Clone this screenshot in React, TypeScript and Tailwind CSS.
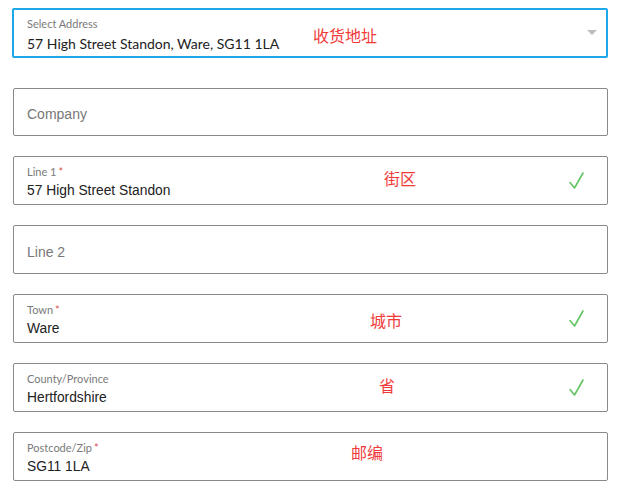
import React from "react";

const lato = { fontFamily: "Lato, 'Noto Sans', sans-serif" };
const arial = { fontFamily: "'Liberation Sans', Arial, sans-serif" };
const cjk = { fontFamily: "'Noto Sans CJK SC', sans-serif" };

function Check() {
  return (
    <svg width="18" height="20" viewBox="0 0 18 20" className="shrink-0">
      <path d="M2 11.5 L6.5 17 L15 2" fill="none" stroke="#62c462" strokeWidth="1.6" strokeLinecap="round" strokeLinejoin="round" />
    </svg>
  );
}

type FieldProps = {
  label?: string;
  required?: boolean;
  value?: string;
  placeholder?: string;
  check?: boolean;
  note?: string;
  noteLeft?: number;
  noteTop?: number;
  short?: boolean;
};

function Field({ label, required, value, placeholder, check, note, noteLeft, noteTop, short }: FieldProps) {
  return (
    <div
      className={`relative ${short ? "h-[48px]" : "h-[49px]"} rounded-[2px] border border-[#8a8a8a] bg-white flex items-center pl-[13px] pr-[21px]`}
    >
      <div className="flex-1 min-w-0">
        {placeholder ? (
          <div className="text-[14px] text-[#777] leading-none pt-[4px]" style={arial}>{placeholder}</div>
        ) : (
          <div className="flex flex-col pt-[1px]">
            <div className="text-[11px] leading-[13px] text-[#7a7a7a] mt-[1px]" style={lato}>
              {label}
              {required && <span className="text-[#d9534f] ml-[2px]">*</span>}
            </div>
            <div className="text-[13.8px] leading-[16px] mt-[5px] text-[#222]" style={arial}>{value}</div>
          </div>
        )}
      </div>
      {check && <Check />}
      {note && (
        <div
          className="absolute text-[16px] leading-[20px] text-[#f03a3a]"
          style={{ ...cjk, left: noteLeft, top: noteTop }}
        >
          {note}
        </div>
      )}
    </div>
  );
}

export default function App() {
  return (
    <div className="w-[628px] h-[502px] bg-white pl-[12px] pr-[20px] pt-[8px]">
      <div className="relative h-[50px] rounded-[2px] border-2 border-[#1ea7e9] flex items-center pl-[13px] pr-[9px]">
        <div className="flex-1 flex flex-col pt-[2px]">
          <div className="text-[11px] leading-[13px] text-[#7a7a7a]" style={lato}>Select Address</div>
          <div className="text-[14px] leading-[17px] mt-[5px] text-[#222]" style={lato}>
            57 High Street Standon, Ware, SG11 1LA
          </div>
        </div>
        <div className="w-0 h-0 border-l-[5px] border-r-[5px] border-t-[5px] border-l-transparent border-r-transparent border-t-[#bdbdbd] mb-[2px]" />
        <div className="absolute left-[299px] top-[15px] text-[16px] leading-[20px] text-[#f03a3a]" style={cjk}>
          收货地址
        </div>
      </div>
      <div className="mt-[30px] flex flex-col gap-[20px] pl-[1px]">
        <Field placeholder="Company" short />
        <Field label="Line 1" required value="57 High Street Standon" check note="街区" noteLeft={370} noteTop={11} />
        <Field placeholder="Line 2" />
        <Field label="Town" required value="Ware" check note="城市" noteLeft={356} noteTop={15} />
        <Field label="County/Province" value="Hertfordshire" check note="省" noteLeft={365} noteTop={11} />
        <Field label="Postcode/Zip" required value="SG11 1LA" note="邮编" noteLeft={337} noteTop={9} />
      </div>
    </div>
  );
}
